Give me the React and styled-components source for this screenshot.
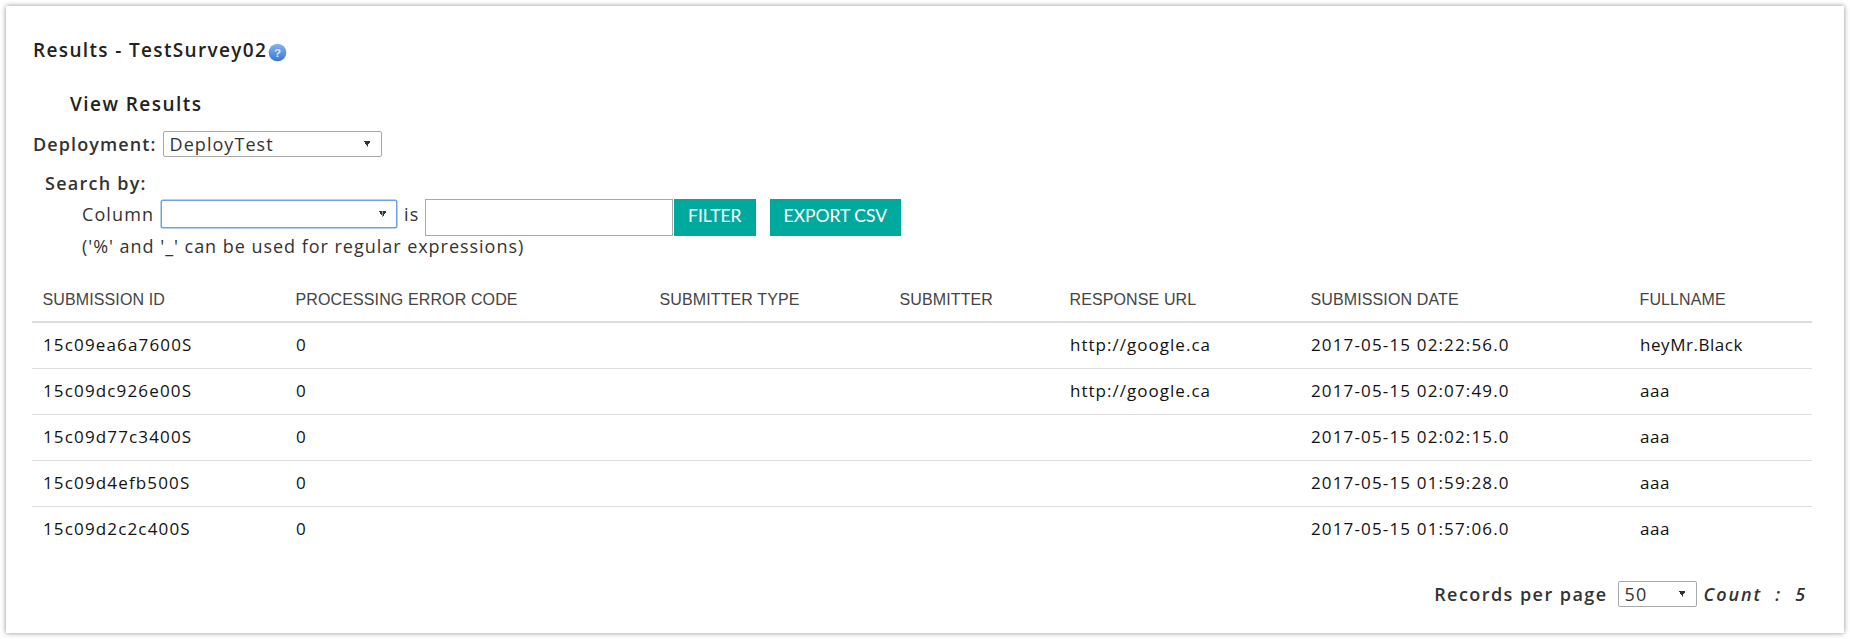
import React from "react";
import styled, { createGlobalStyle } from "styled-components";

const Global = createGlobalStyle`
  html, body { margin: 0; padding: 0; background: #fff; }
  body { font-family: "Open Sans", "Noto Sans", sans-serif; color: #333; }
`;
const Page = styled.div`
  width: 1850px; height: 639px; box-sizing: border-box; padding: 6px 6px 6px 6px; overflow: hidden;
`;
const Card = styled.main`
  height: 627px; box-sizing: border-box; background: #fff;
  box-shadow: 0 0 5px rgba(0,0,0,.45);
  padding: 34px 31px 0 27px;
`;
const TitleRow = styled.div`display: flex; align-items: center; height: 21px; gap: 1px;`;
const Title = styled.h1`
  margin: 0; font-size: 19px; font-weight: 600; letter-spacing: 1.35px; color: #222; line-height: 21px; white-space: nowrap;
`;
const SubTitle = styled.h2`
  margin: 32px 0 0 37px; font-size: 19px; font-weight: 600; letter-spacing: 1.45px; color: #222; line-height: 22px;
`;
const DeployRow = styled.div`display: flex; align-items: center; margin-top: 16px; height: 26px;`;
const BoldLabel = styled.label`font-size: 18px; font-weight: 600; letter-spacing: 1.1px; color: #333; white-space: nowrap;`;
const Select = styled.select`
  appearance: none; box-sizing: border-box; font-family: "Open Sans", sans-serif;
  font-size: 18px; letter-spacing: 1.05px; color: #333; border-radius: 2px; margin: 0;
  width: ${p => p.$w}px; height: ${p => p.$h}px;
  border: 1px solid ${p => (p.$focus ? "#6f9fe8" : "#a9a9a9")};
  box-shadow: ${p => (p.$focus ? "0 0 0 .5px #6f9fe8" : "none")};
  padding: 0 0 0 6px; outline: none;
  background-color: #fff;
  background-image: linear-gradient(to top right, transparent 50%, #333 50%), linear-gradient(to top left, transparent 50%, #333 50%);
  background-size: 3.5px 6px, 3.5px 6px;
  background-position: right 13.5px center, right 10px center;
  background-repeat: no-repeat;
`;
const DeploySelect = styled(Select)`margin-left: 6px;`;
const SearchBlock = styled.section`margin: 15px 0 0 12px;`;
const SearchLabel = styled.div`font-size: 18px; font-weight: 600; letter-spacing: 1.25px; line-height: 23px; white-space: nowrap;`;
const SearchRow = styled.div`display: flex; align-items: flex-start; margin: 4px 0 0 37px; height: 37px; font-size: 18px; letter-spacing: 1.1px; line-height: 28px;`;
const ColumnWord = styled.span`width: 79px; white-space: nowrap; margin-top: 1px;`;
const IsWord = styled.span`width: 21px; margin-left: 7px; white-space: nowrap; margin-top: 1px;`;
const FieldSelect = styled(Select)`margin-top: 1px;`;
const TextInput = styled.input`
  box-sizing: border-box; width: 248px; height: 37px; border: 1px solid #a9a9a9; margin: 0 1px 0 0; padding: 0; background: #fff;
`;
const Button = styled.button`
  box-sizing: border-box; height: 37px; border: 0; background: #00a99d; color: #fff; padding: 0 14px 4px;
  margin: 0 ${p => p.$mr || 0}px 0 0; font-family: Lato, sans-serif; font-size: 17.5px; font-weight: 400; white-space: nowrap;
`;
const Note = styled.div`margin-left: 37px; font-size: 18px; letter-spacing: .97px; line-height: 20px; color: #333; white-space: nowrap;`;
const Table = styled.table`
  margin: 22px 0 0 -1px; width: 1780px; border-collapse: collapse; table-layout: fixed;
`;
const Th = styled.th`
  width: ${p => p.$w}px; box-sizing: border-box; text-align: left; padding: 0 0 0 10.5px; height: 44px;
  font: 400 16px "Liberation Sans", Arial, sans-serif; letter-spacing: .12px; color: #444; border-bottom: 2px solid #ddd; white-space: nowrap;
`;
const Td = styled.td`
  box-sizing: border-box; height: 46px; padding: 0 0 2px 11px; font-size: 17px;
  letter-spacing: ${p => p.$spacing}px; color: #111; border-bottom: 1px solid #ddd; white-space: nowrap;
`;
const Row = styled.tr`&:last-child td { border-bottom: 0; }`;
const Footer = styled.footer`
  display: flex; justify-content: flex-end; align-items: center; height: 26px; margin: 29px 6px 0 0;
`;
const FooterLabel = styled.span`font-size: 18px; font-weight: 600; letter-spacing: 1.45px; margin-right: 10px; color: #333; white-space: nowrap;`;
const Count = styled.span`font-size: 18px; font-style: italic; font-weight: 600; letter-spacing: 1.9px; margin-left: 7px; white-space: pre; color: #333;`;
const HelpSvg = styled.svg`margin-top: 4px; flex: none;`;

const HelpIcon = () => (
  <HelpSvg width="19" height="19" viewBox="0 0 18 18" aria-hidden="true">
    <defs>
      <linearGradient id="help" x1="0" y1="0" x2="0" y2="1">
        <stop offset="0" stopColor="#7fb0ec" />
        <stop offset="1" stopColor="#2f6fd0" />
      </linearGradient>
    </defs>
    <circle cx="9" cy="9" r="8.4" fill="url(#help)" opacity=".95" />
    <text x="9" y="13" textAnchor="middle" fontSize="11" fontWeight="700" fontFamily="Liberation Sans" fill="#dfeaf8">?</text>
  </HelpSvg>
);

const columns = [
  ["SUBMISSION ID", 253], ["PROCESSING ERROR CODE", 364], ["SUBMITTER TYPE", 240], ["SUBMITTER", 170],
  ["RESPONSE URL", 241], ["SUBMISSION DATE", 329], ["FULLNAME", 183],
];
const cellSpacing = [1.15, 1.15, 1.15, 1.15, 1.02, 1.15, 0.55];
const rows = [
  ["15c09ea6a7600S", "0", "", "", "http://google.ca", "2017-05-15 02:22:56.0", "heyMr.Black"],
  ["15c09dc926e00S", "0", "", "", "http://google.ca", "2017-05-15 02:07:49.0", "aaa"],
  ["15c09d77c3400S", "0", "", "", "", "2017-05-15 02:02:15.0", "aaa"],
  ["15c09d4efb500S", "0", "", "", "", "2017-05-15 01:59:28.0", "aaa"],
  ["15c09d2c2c400S", "0", "", "", "", "2017-05-15 01:57:06.0", "aaa"],
];

export default function App() {
  return (
    <Page>
      <Global />
      <Card>
        <TitleRow>
          <Title>Results - TestSurvey02</Title>
          <HelpIcon />
        </TitleRow>
        <SubTitle>View Results</SubTitle>
        <DeployRow>
          <BoldLabel>Deployment:</BoldLabel>
          <DeploySelect $w={219} $h={26} defaultValue="DeployTest"><option>DeployTest</option></DeploySelect>
        </DeployRow>
        <SearchBlock>
          <SearchLabel>Search by:</SearchLabel>
          <SearchRow>
            <ColumnWord>Column</ColumnWord>
            <FieldSelect $w={236} $h={28} $focus defaultValue=""><option value=""></option></FieldSelect>
            <IsWord>is</IsWord>
            <TextInput />
            <Button $mr={14}>FILTER</Button>
            <Button>EXPORT CSV</Button>
          </SearchRow>
          <Note>('%' and '_' can be used for regular expressions)</Note>
        </SearchBlock>
        <Table>
          <thead>
            <tr>{columns.map(([c, w]) => <Th key={c} $w={w}>{c}</Th>)}</tr>
          </thead>
          <tbody>
            {rows.map(r => (
              <Row key={r[0]}>{r.map((v, i) => <Td key={i} $spacing={cellSpacing[i]}>{v}</Td>)}</Row>
            ))}
          </tbody>
        </Table>
        <Footer>
          <FooterLabel>Records per page</FooterLabel>
          <Select $w={79} $h={26} defaultValue="50"><option>50</option></Select>
          <Count>Count  :  5</Count>
        </Footer>
      </Card>
    </Page>
  );
}
